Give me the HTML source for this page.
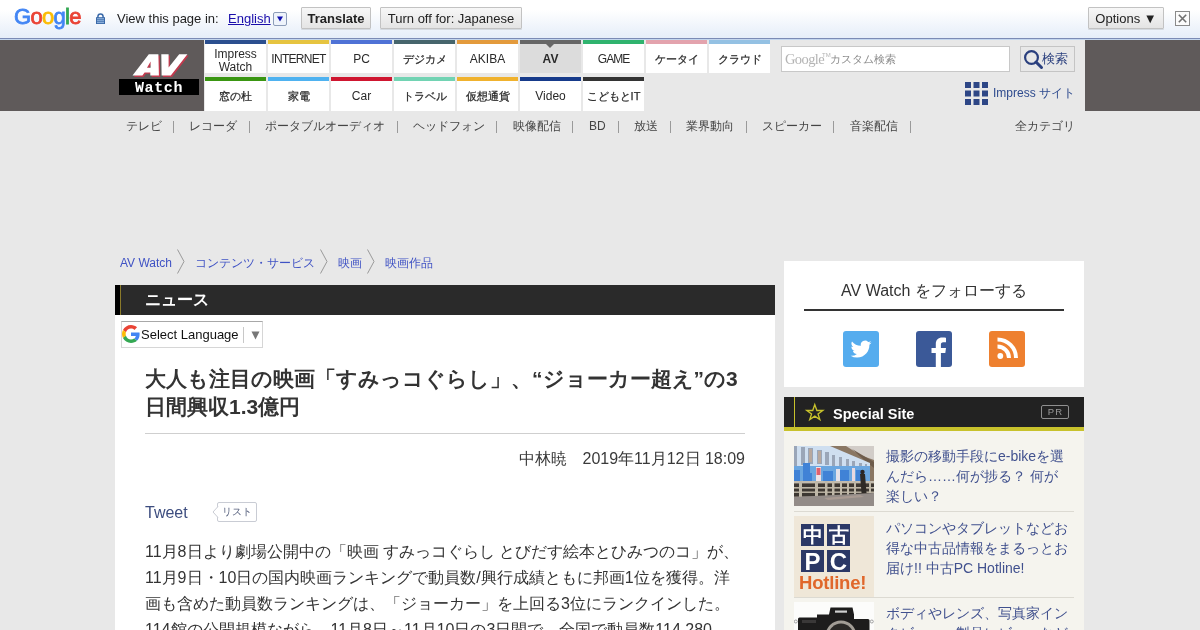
<!DOCTYPE html>
<html><head><meta charset="utf-8">
<style>
*{box-sizing:border-box;margin:0;padding:0}
html,body{width:1200px;height:630px;overflow:hidden}
body{background:#e8e8e8;font-family:"Liberation Sans",sans-serif;color:#333;position:relative}
.a{position:absolute;white-space:nowrap}
/* translate bar */
#gt{position:absolute;left:0;top:0;width:1200px;height:39px;background:linear-gradient(#ffffff 0px,#ffffff 10px,#e6eef9 37px);border-bottom:1px solid #7b8bb5}
#gt2{position:absolute;left:0;top:39px;width:1200px;height:1px;background:#c3d6ee}
.btn{position:absolute;top:7px;height:22px;border:1px solid #c2c2c2;border-radius:1px;background:linear-gradient(#f7f7f7,#e4e4e4);font-size:13px;line-height:21px;color:#222;text-align:center;box-shadow:0 1px 0 rgba(0,0,0,.1)}
/* header */
.dk{position:absolute;top:40px;height:71px;background:#5f5a5a}
.tab{position:absolute;width:61px;background:#fff;border-top:4px solid #000;font-size:12px;color:#2a2a2a;text-align:center}
.jp{font-size:11px;-webkit-text-stroke:0.25px #2a2a2a}
.r1{top:40px;height:33px;line-height:31px}
.r2{top:77px;height:34px;line-height:30px}
.nav{position:absolute;top:119px;font-size:12px;line-height:14px;color:#444;white-space:nowrap}
.sep{position:absolute;top:118px;font-size:13px;color:#666}
</style></head><body><div style="position:absolute;left:0;top:0;width:1200px;height:630px;will-change:transform">

<!-- Google translate bar -->
<div id="gt"></div><div id="gt2"></div>
<div class="a" style="left:14px;top:2px;font-size:22px;line-height:30px;letter-spacing:-0.7px;-webkit-text-stroke:0.8px"><span style="color:#4285f4;-webkit-text-stroke-color:#4285f4">G</span><span style="color:#ea4335;-webkit-text-stroke-color:#ea4335">o</span><span style="color:#fbbc05;-webkit-text-stroke-color:#fbbc05">o</span><span style="color:#4285f4;-webkit-text-stroke-color:#4285f4">g</span><span style="color:#34a853;-webkit-text-stroke-color:#34a853">l</span><span style="color:#ea4335;-webkit-text-stroke-color:#ea4335">e</span></div>
<svg class="a" style="left:96px;top:13px" width="9" height="11" viewBox="0 0 9 11"><path d="M1.9 5V3.6a2.6 2.6 0 0 1 5.2 0V5" fill="none" stroke="#3a69a8" stroke-width="1.5"/><rect x="0" y="4.2" width="9" height="6.8" fill="#3a69a8"/><g fill="#9fc0e6"><rect x="1" y="5.3" width="7" height="1"/><rect x="1" y="7.3" width="7" height="1"/><rect x="1" y="9.2" width="7" height="0.9"/></g></svg>
<div class="a" style="left:117px;top:11px;font-size:13px;line-height:16px;color:#222">View this page in:</div>
<div class="a" style="left:228px;top:11px;font-size:13px;line-height:16px;color:#1a0dab;text-decoration:underline">English</div>
<div class="a" style="left:273px;top:12px;width:14px;height:14px;border:1px solid #8c9cb8;border-radius:2px;background:#eef3fb"></div><svg class="a" style="left:277px;top:16px" width="6" height="6"><path d="M0 0.5H6L3 5.5Z" fill="#1010b0"/></svg>
<div class="btn" style="left:301px;width:70px;font-weight:bold">Translate</div>
<div class="btn" style="left:380px;width:142px">Turn off for: Japanese</div>
<div class="btn" style="left:1088px;width:76px">Options &#9660;</div>
<div class="a" style="left:1175px;top:11px;width:15px;height:15px;border:1px solid #8a8a8a;background:#fbfbfb"></div>
<svg class="a" style="left:1175px;top:11px" width="15" height="15"><path d="M3.8 3.8l7.4 7.4M11.2 3.8l-7.4 7.4" stroke="#707070" stroke-width="1.6"/></svg>

<!-- header -->
<div class="dk" style="left:0;width:204px"></div>
<div class="dk" style="left:1085px;width:115px"></div>

<div class="tab r1" style="left:205px;border-top-color:#2b4f8f;line-height:13px;padding-top:4px">Impress<br>Watch</div>
<div class="tab r1" style="left:268px;border-top-color:#e6c440;letter-spacing:-0.7px">INTERNET</div>
<div class="tab r1" style="left:331px;border-top-color:#4f72d6">PC</div>
<div class="tab r1" style="left:394px;border-top-color:#46656c"><span class="jp">デジカメ</span></div>
<div class="tab r1" style="left:457px;border-top-color:#e39a3c">AKIBA</div>
<div class="tab r1" style="left:520px;border-top-color:#666666;background:#dcdcdc;font-weight:bold">AV</div>
<div class="tab r1" style="left:583px;border-top-color:#2fb36e;letter-spacing:-1px">GAME</div>
<div class="tab r1" style="left:646px;border-top-color:#e3a3ad"><span class="jp">ケータイ</span></div>
<div class="tab r1" style="left:709px;border-top-color:#94c1e3"><span class="jp">クラウド</span></div>
<div class="tab r2" style="left:205px;border-top-color:#3a9612"><span class="jp">窓の杜</span></div>
<div class="tab r2" style="left:268px;border-top-color:#4fb2f0"><span class="jp">家電</span></div>
<div class="tab r2" style="left:331px;border-top-color:#cf1630">Car</div>
<div class="tab r2" style="left:394px;border-top-color:#72d3b3"><span class="jp">トラベル</span></div>
<div class="tab r2" style="left:457px;border-top-color:#f0b22e"><span class="jp">仮想通貨</span></div>
<div class="tab r2" style="left:520px;border-top-color:#163a8a">Video</div>
<div class="tab r2" style="left:583px;border-top-color:#333333"><span class="jp">こどもとIT</span></div>
<div class="a" style="left:546px;top:44px;width:0;height:0;border-left:4px solid transparent;border-right:4px solid transparent;border-top:4px solid #666"></div>

<!-- logo -->
<svg class="a" style="left:110px;top:45px" width="95" height="55" viewBox="110 45 95 55">
<g fill="#c23a4e" transform="translate(1.3,1.3)">
<path d="M132.5 75.6L148.8 54.3H158.4L158.9 75.6H150.3V72.4H144.6L142.4 75.6ZM147 67.8H150.6V61.6Z"/>
<path d="M161.3 54.3H168.6V67.4L179.2 54.3H187.4L170.8 75.6H161.6Z"/>
</g>
<g fill="#fff">
<path d="M132.5 75.6L148.8 54.3H158.4L158.9 75.6H150.3V72.4H144.6L142.4 75.6ZM147 67.8H150.6V61.6Z"/>
<path d="M161.3 54.3H168.6V67.4L179.2 54.3H187.4L170.8 75.6H161.6Z"/>
</g>
</svg>
<div class="a" style="left:119px;top:79px;width:80px;height:16px;background:#000"></div>
<div class="a" style="left:135px;top:80px;height:16px;color:#fff;font-family:'Liberation Mono',monospace;font-weight:bold;font-size:15px;line-height:17px;letter-spacing:0.6px">Watch</div>

<!-- search -->
<div class="a" style="left:781px;top:46px;width:229px;height:26px;background:#fff;border:1px solid #c8c8c8"></div>
<div class="a" style="left:785px;top:51px;font-family:'Liberation Serif',serif;font-size:14.5px;line-height:16px;color:#b4b4b4;letter-spacing:-0.6px">Google</div>
<div class="a" style="left:822px;top:52px;font-size:6px;line-height:7px;color:#b4b4b4">TM</div>
<div class="a" style="left:830px;top:52px;font-size:11px;line-height:14px;color:#8a8a8a">カスタム検索</div>
<div class="a" style="left:1020px;top:46px;width:55px;height:26px;background:#e8e8e8;border:1px solid #c4c4c4"></div>
<svg class="a" style="left:1023px;top:49px" width="22" height="22" viewBox="0 0 22 22"><circle cx="8.5" cy="8.5" r="6.4" fill="none" stroke="#2a3f7e" stroke-width="2.2"/><path d="M13 13l5.5 5.5" stroke="#2a3f7e" stroke-width="3" stroke-linecap="round"/></svg>
<div class="a" style="left:1042px;top:51px;font-size:13px;line-height:16px;color:#2a3f7e">検索</div>

<!-- impress site -->
<svg class="a" style="left:965px;top:82px" width="23" height="23" viewBox="0 0 23 23" fill="#2d4686">
<rect x="0" y="0" width="6" height="6"/><rect x="8.5" y="0" width="6" height="6"/><rect x="17" y="0" width="6" height="6"/>
<rect x="0" y="8.5" width="6" height="6"/><rect x="8.5" y="8.5" width="6" height="6"/><rect x="17" y="8.5" width="6" height="6"/>
<rect x="0" y="17" width="6" height="6"/><rect x="8.5" y="17" width="6" height="6"/><rect x="17" y="17" width="6" height="6"/>
</svg>
<div class="a" style="left:993px;top:86px;font-size:12px;line-height:14px;color:#2d4a8e">Impress サイト</div>

<!-- category nav -->
<div class="nav" style="left:126px">テレビ</div>
<div class="nav" style="left:189px">レコーダ</div>
<div class="nav" style="left:265px">ポータブルオーディオ</div>
<div class="nav" style="left:413px">ヘッドフォン</div>
<div class="nav" style="left:513px">映像配信</div>
<div class="nav" style="left:589px">BD</div>
<div class="nav" style="left:634px">放送</div>
<div class="nav" style="left:686px">業界動向</div>
<div class="nav" style="left:762px">スピーカー</div>
<div class="nav" style="left:850px">音楽配信</div>
<div class="a" style="left:173px;top:121px;width:1px;height:12px;background:#9a9a9a"></div><div class="a" style="left:249px;top:121px;width:1px;height:12px;background:#9a9a9a"></div><div class="a" style="left:397px;top:121px;width:1px;height:12px;background:#9a9a9a"></div><div class="a" style="left:496px;top:121px;width:1px;height:12px;background:#9a9a9a"></div><div class="a" style="left:572px;top:121px;width:1px;height:12px;background:#9a9a9a"></div><div class="a" style="left:618px;top:121px;width:1px;height:12px;background:#9a9a9a"></div><div class="a" style="left:670px;top:121px;width:1px;height:12px;background:#9a9a9a"></div><div class="a" style="left:746px;top:121px;width:1px;height:12px;background:#9a9a9a"></div><div class="a" style="left:833px;top:121px;width:1px;height:12px;background:#9a9a9a"></div><div class="a" style="left:910px;top:121px;width:1px;height:12px;background:#9a9a9a"></div>
<div class="nav" style="left:1015px">全カテゴリ</div>

<!-- breadcrumbs -->
<div class="a" style="left:120px;top:256px;font-size:12px;line-height:14px;color:#3f52c4">AV Watch</div>
<div class="a" style="left:195px;top:256px;font-size:12px;line-height:14px;color:#3f52c4">コンテンツ・サービス</div>
<div class="a" style="left:338px;top:256px;font-size:12px;line-height:14px;color:#3f52c4">映画</div>
<div class="a" style="left:385px;top:256px;font-size:12px;line-height:14px;color:#3f52c4">映画作品</div>
<svg class="a" style="left:176px;top:249px" width="10" height="25"><path d="M1.5 0.5L8 12.5L1.5 24.5" fill="none" stroke="#9a9a9a" stroke-width="1"/></svg>
<svg class="a" style="left:319px;top:249px" width="10" height="25"><path d="M1.5 0.5L8 12.5L1.5 24.5" fill="none" stroke="#9a9a9a" stroke-width="1"/></svg>
<svg class="a" style="left:366px;top:249px" width="10" height="25"><path d="M1.5 0.5L8 12.5L1.5 24.5" fill="none" stroke="#9a9a9a" stroke-width="1"/></svg>

<!-- main column -->
<div class="a" style="left:115px;top:285px;width:660px;height:30px;background:#2a2a2a"></div>
<div class="a" style="left:115px;top:285px;width:5px;height:30px;background:#000"></div>
<div class="a" style="left:120px;top:285px;width:1px;height:30px;background:#8a7a2a"></div>
<div class="a" style="left:145px;top:291px;font-size:16px;line-height:18px;font-weight:bold;color:#fff">ニュース</div>
<div class="a" style="left:115px;top:315px;width:660px;height:315px;background:#fff"></div>

<!-- select language -->
<div class="a" style="left:121px;top:321px;width:142px;height:27px;background:#fff;border:1px solid #d6d6d6;border-top-color:#a8a8a8"></div>
<svg class="a" style="left:122px;top:325px" width="18" height="18" viewBox="0 0 48 48"><path fill="#EA4335" d="M24 9.5c3.54 0 6.71 1.22 9.21 3.6l6.85-6.85C35.9 2.38 30.47 0 24 0 14.62 0 6.51 5.38 2.56 13.22l7.98 6.19C12.43 13.72 17.74 9.5 24 9.5z"/><path fill="#4285F4" d="M46.98 24.55c0-1.57-.15-3.09-.38-4.55H24v9.02h12.94c-.58 2.96-2.26 5.48-4.78 7.18l7.73 6c4.51-4.18 7.09-10.36 7.09-17.65z"/><path fill="#FBBC05" d="M10.53 28.59c-.48-1.45-.76-2.99-.76-4.59s.27-3.14.76-4.59l-7.98-6.19C.92 16.46 0 20.12 0 24c0 3.88.92 7.54 2.56 10.78l7.97-6.19z"/><path fill="#34A853" d="M24 48c6.48 0 11.93-2.13 15.89-5.81l-7.73-6c-2.15 1.45-4.92 2.3-8.16 2.3-6.26 0-11.57-4.22-13.47-9.91l-7.98 6.19C6.51 42.62 14.62 48 24 48z"/></svg>
<div class="a" style="left:141px;top:327px;font-size:13px;line-height:16px;color:#111">Select Language</div>
<div class="a" style="left:243px;top:327px;width:1px;height:16px;background:#c8c8c8"></div>
<svg class="a" style="left:251px;top:331px" width="9" height="9"><path d="M0.5 0.5H8.5L4.5 8.5Z" fill="#777"/></svg>

<!-- title -->
<div class="a" style="left:145px;top:365px;width:610px;white-space:normal;font-size:21px;line-height:28px;font-weight:bold;color:#333">大人も注目の映画「すみっコぐらし」、“ジョーカー超え”の3日間興収1.3億円</div>
<div class="a" style="left:145px;top:433px;width:600px;height:1px;background:#cfcfcf"></div>
<div class="a" style="left:745px;top:449px;transform:translateX(-100%);font-size:16px;line-height:20px;color:#3a3a3a">中林暁　2019年11月12日 18:09</div>

<!-- tweet -->
<div class="a" style="left:145px;top:504px;font-size:16px;line-height:18px;color:#3d4d7f">Tweet</div>
<div class="a" style="left:217px;top:502px;width:40px;height:20px;border:1px solid #c9ccd4;border-radius:2px;background:#fff;font-size:10px;line-height:18px;color:#5a6480;text-align:center">リスト</div>
<svg class="a" style="left:212px;top:506px" width="7" height="12"><path d="M6 0.5L1 6L6 11.5" fill="#fff" stroke="#c9ccd4" stroke-width="1"/></svg>

<!-- body -->
<div class="a" style="left:145px;top:539px;width:600px;white-space:normal;font-size:16px;line-height:26px;color:#333">11月8日より劇場公開中の「映画 すみっコぐらし とびだす絵本とひみつのコ」が、11月9日・10日の国内映画ランキングで動員数/興行成績ともに邦画1位を獲得。洋画も含めた動員数ランキングは、「ジョーカー」を上回る3位にランクインした。<br>114館の公開規模ながら、11月8日～11月10日の3日間で、全国で動員数114,280<br>人、興行収入1億3千万円を記録した。</div>

<!-- sidebar follow -->
<div class="a" style="left:784px;top:261px;width:300px;height:126px;background:#fff"></div>
<div class="a" style="left:784px;top:281px;width:300px;text-align:center;font-size:16px;line-height:20px;color:#333">AV Watch をフォローする</div>
<div class="a" style="left:804px;top:309px;width:260px;height:2px;background:#333"></div>
<svg class="a" style="left:843px;top:331px" width="36" height="36" viewBox="0 0 36 36"><rect width="36" height="36" rx="3" fill="#55acee"/><path fill="#fff" d="M28.5 11.6c-.77.34-1.6.57-2.47.68.89-.53 1.57-1.37 1.89-2.38-.83.49-1.75.85-2.73 1.05a4.3 4.3 0 0 0-7.33 3.92c-3.57-.18-6.74-1.89-8.86-4.49-.37.64-.58 1.37-.58 2.16 0 1.49.76 2.81 1.91 3.58-.7-.02-1.37-.22-1.95-.54v.05c0 2.08 1.48 3.82 3.45 4.22-.36.1-.74.15-1.13.15-.28 0-.55-.03-.81-.08.55 1.71 2.14 2.96 4.02 2.99a8.63 8.63 0 0 1-6.37 1.78 12.2 12.2 0 0 0 6.6 1.93c7.92 0 12.25-6.56 12.25-12.25l-.01-.56c.84-.61 1.57-1.36 2.14-2.22z"/></svg>
<svg class="a" style="left:916px;top:331px" width="36" height="36" viewBox="0 0 36 36"><rect width="36" height="36" rx="3" fill="#3b5998"/><path fill="#fff" d="M24.9 36V22.1h4.4l.7-5.1h-5.1v-3.3c0-1.5.4-2.5 2.5-2.5H30V6.7c-.5-.1-2-.2-3.8-.2-3.8 0-6.4 2.3-6.4 6.6V17h-4.3v5.1h4.3V36z"/></svg>
<svg class="a" style="left:989px;top:331px" width="36" height="36" viewBox="0 0 36 36"><rect width="36" height="36" rx="3" fill="#ee802f"/><circle cx="11.3" cy="25" r="2.9" fill="#fff"/><path fill="none" stroke="#fff" stroke-width="4" d="M8.5 15.5a11.5 11.5 0 0 1 11.5 11.5M8.5 8.5a18.5 18.5 0 0 1 18.5 18.5"/></svg>

<!-- special site -->
<div class="a" style="left:784px;top:397px;width:300px;height:30px;background:#222"></div>
<div class="a" style="left:784px;top:427px;width:300px;height:4px;background:#c8c22c"></div>
<div class="a" style="left:794px;top:397px;width:1px;height:30px;background:#c8c22c"></div>
<svg class="a" style="left:804px;top:402px" width="21" height="20" viewBox="0 0 21 20"><path d="M10.5 1.6L12.8 8.1h6.6l-5.3 3.9 2 6.3-5.6-3.9-5.6 3.9 2-6.3L1.6 8.1h6.6z" fill="none" stroke="#c8c22c" stroke-width="1.5" stroke-linejoin="miter" transform="translate(10.8,10.2) scale(0.9) translate(-10.5,-10)"/></svg>
<div class="a" style="left:833px;top:406px;font-size:14.5px;line-height:16px;font-weight:bold;color:#fff">Special Site</div>
<div class="a" style="left:1041px;top:405px;width:28px;height:14px;border:1px solid #8f8f8f;border-radius:2px;font-size:9.5px;line-height:11px;color:#9a9a9a;text-align:center;letter-spacing:1.2px;padding-left:1px">PR</div>
<div class="a" style="left:784px;top:431px;width:300px;height:199px;background:#f5f4ee"></div>


<!-- special items -->
<svg class="a" style="left:794px;top:446px" width="80" height="60" viewBox="0 0 80 60"><defs><filter id="bl" x="0" y="0" width="1" height="1"><feGaussianBlur stdDeviation="0.45"/></filter><clipPath id="cp"><rect width="80" height="60"/></clipPath></defs><g filter="url(#bl)" clip-path="url(#cp)">
<rect width="80" height="60" fill="#9c9086"/>
<path d="M34 0H80V40H34Z" fill="#8a7764"/>
<path d="M52 0H80V14L66 9Z" fill="#d2cdc8"/>
<path d="M58 3L80 16V22L70 14Z" fill="#6e5c4c"/>
<path d="M0 0H36L76 17V35H0Z" fill="#cfdff0"/>
<g fill="#9aa6b8"><rect x="0" y="0" width="3" height="20"/><rect x="7" y="1" width="4" height="18"/><rect x="14" y="2" width="5" height="16"/><rect x="23" y="4" width="5" height="14"/><rect x="31" y="6" width="4" height="13"/><rect x="38" y="9" width="3" height="11"/><rect x="45" y="11" width="3" height="10"/><rect x="52" y="13" width="3" height="9"/><rect x="58" y="15" width="3" height="8"/><rect x="65" y="17" width="3" height="7"/><rect x="71" y="18" width="2" height="6"/></g>
<g fill="#b7a89e"><rect x="15" y="3" width="3" height="13"/><rect x="24" y="5" width="3" height="12"/></g>
<path d="M0 20H76V35H0Z" fill="#6aa6e0"/>
<g fill="#3f82d6"><rect x="0" y="24" width="6" height="11"/><rect x="9" y="17" width="7" height="10"/><rect x="9" y="27" width="9" height="8"/><rect x="29" y="25" width="10" height="10"/><rect x="46" y="24" width="9" height="11"/><rect x="62" y="24" width="6" height="11"/></g>
<rect x="22" y="21" width="5" height="14" fill="#eee3e6"/><path d="M22.5 22h4v7h-4z" fill="#e0606e"/>
<rect x="42" y="23" width="4" height="12" fill="#e5e2ea"/>
<rect x="58" y="22" width="3" height="13" fill="#e8d8e0"/>
<rect x="0" y="35" width="80" height="2.5" fill="#c3bcae"/>
<rect x="0" y="37.5" width="80" height="13" fill="#3d3731"/>
<g fill="#bfb8a8"><rect x="0" y="41" width="80" height="1.6"/><rect x="0" y="45.5" width="80" height="1.4"/><rect x="5" y="35" width="3" height="17"/><rect x="21" y="35" width="3" height="16"/><rect x="31" y="35" width="2.5" height="15"/><rect x="38" y="35" width="2.5" height="15"/><rect x="46" y="35" width="2" height="14"/><rect x="53" y="35" width="2" height="14"/><rect x="60" y="35" width="2" height="13"/><rect x="75" y="35" width="2" height="12"/></g>
<path d="M0 51L80 47V60H0Z" fill="#938c88"/>
<path d="M30 52L66 49L70 51L34 54Z" fill="#a89a92"/>
<path d="M66 28h5l1.5 19h-5z" fill="#2f2b28"/><circle cx="68.5" cy="26" r="2.2" fill="#2b2826"/>
</g></svg>
<div class="a" style="left:886px;top:446px;width:182px;white-space:normal;font-size:14px;line-height:20px;color:#41518e">撮影の移動手段にe-bikeを選んだら……何が捗る？ 何が楽しい？</div>
<div class="a" style="left:794px;top:511px;width:280px;height:1px;background:#dcdad2"></div>

<div class="a" style="left:794px;top:516px;width:80px;height:81px;background:#efe7d8"></div>
<div class="a" style="left:801px;top:524px;width:23px;height:22px;background:#2b3866;color:#fff;font-size:20px;line-height:22px;text-align:center;font-weight:bold">中</div>
<div class="a" style="left:827px;top:524px;width:23px;height:22px;background:#2b3866;color:#fff;font-size:20px;line-height:22px;text-align:center;font-weight:bold">古</div>
<div class="a" style="left:801px;top:550px;width:23px;height:22px;background:#2b3866;color:#fff;font-size:24px;line-height:23px;text-align:center;font-weight:bold">P</div>
<div class="a" style="left:827px;top:550px;width:23px;height:22px;background:#2b3866;color:#fff;font-size:24px;line-height:23px;text-align:center;font-weight:bold">C</div>
<div class="a" style="left:799px;top:574px;font-size:18.5px;line-height:18px;font-weight:bold;color:#e0672b;letter-spacing:-0.2px">Hotline!</div>
<div class="a" style="left:886px;top:518px;width:190px;white-space:normal;font-size:14px;line-height:20px;color:#41518e">パソコンやタブレットなどお得な中古品情報をまるっとお届け!! 中古PC Hotline!</div>
<div class="a" style="left:794px;top:597px;width:280px;height:1px;background:#dcdad2"></div>

<svg class="a" style="left:794px;top:602px" width="80" height="28" viewBox="0 0 80 28">
<rect width="80" height="28" fill="#fcfcfb"/>
<path d="M4 28V17q0-1.5 1.5-1.5H23V12.5H35L36.5 5.5H58.5L60 12.5V17H74q1.5 0 1.5 1.5V28Z" fill="#1d1c1c"/>
<rect x="41" y="8.5" width="12" height="2.2" fill="#cfcfcf"/>
<circle cx="47" cy="34" r="15.5" fill="#a29d96"/>
<circle cx="47" cy="34" r="12.5" fill="#2b2927"/>
<rect x="8" y="18" width="14" height="3" fill="#3a3838"/>
<circle cx="1.8" cy="19.5" r="1.5" fill="none" stroke="#8a8a8a" stroke-width="0.8"/>
<circle cx="77.8" cy="19.5" r="1.5" fill="none" stroke="#8a8a8a" stroke-width="0.8"/>
</svg>
<div class="a" style="left:886px;top:603px;width:190px;white-space:normal;font-size:14px;line-height:20px;color:#41518e">ボディやレンズ、写真家インタビュー、製品レビューなど</div>

</div></body></html>
